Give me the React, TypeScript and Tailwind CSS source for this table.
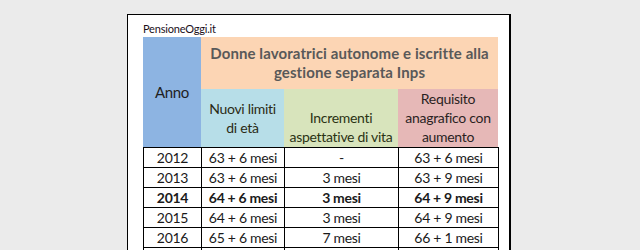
const rows = [
  { year: "2012", limit: "63 + 6 mesi", inc: "-", req: "63 + 6 mesi" },
  { year: "2013", limit: "63 + 6 mesi", inc: "3 mesi", req: "63 + 9 mesi" },
  { year: "2014", limit: "64 + 6 mesi", inc: "3 mesi", req: "64 + 9 mesi", bold: true },
  { year: "2015", limit: "64 + 6 mesi", inc: "3 mesi", req: "64 + 9 mesi" },
  { year: "2016", limit: "65 + 6 mesi", inc: "7 mesi", req: "66 + 1 mesi" },
  { year: "", limit: "", inc: "", req: "" },
];

const cols = "grid grid-cols-[58px_83px_114px_100px]";

export default function App() {
  return (
    <div className="h-[250px] overflow-hidden bg-[#ebebeb] font-['Lato','Liberation_Sans',sans-serif]">
      <div className="ml-[127px] mt-[14px] h-[300px] w-[384px] border border-r-2 border-black bg-white pl-[15px]">
        <p className="h-[22px] pt-[8px] text-[11px] leading-[12px] tracking-[-0.2px] text-[#1a0f1a]">
          PensioneOggi.it
        </p>

        <div className={`${cols} text-[14px] leading-[19px] tracking-[-0.3px]`}>
          <div className="row-span-2 flex items-center justify-center bg-[#8db4e2] text-[15px] text-[#1f1f1f]">
            Anno
          </div>
          <div className="col-span-3 flex h-[52px] items-center justify-center bg-[#fcd5b4] text-center text-[15px] font-bold tracking-[0.1px] text-[#595959]">
            Donne lavoratrici autonome e iscritte alla
            <br />
            gestione separata Inps
          </div>
          <div className="flex h-[58px] items-center justify-center bg-[#b7dee8] text-center text-[#2b2b14]">
            Nuovi limiti
            <br />
            di età
          </div>
          <div className="flex items-end justify-center bg-[#d8e4bc] pb-[1px] text-center text-[#2b3314]">
            Incrementi
            <br />
            aspettative di vita
          </div>
          <div className="flex items-end justify-center bg-[#e6b8b7] pb-[1px] text-center text-[#2b1f1f]">
            Requisito
            <br />
            anagrafico con
            <br />
            aumento
          </div>
        </div>

        <div className="w-[356px] border-l border-t border-black text-[14px] tracking-[-0.3px] text-[#1a1a1a]">
          {rows.map((r, i) => (
            <div
              key={i}
              className={`${cols} h-[20px] border-b border-black leading-[19px] ${r.bold ? "font-bold" : ""}`}
            >
              <div className="border-r border-black text-center">{r.year}</div>
              <div className="border-r border-black text-center">{r.limit}</div>
              <div className="border-r border-black text-center">{r.inc}</div>
              <div className="border-r border-black text-center">{r.req}</div>
            </div>
          ))}
        </div>
      </div>
    </div>
  );
}
